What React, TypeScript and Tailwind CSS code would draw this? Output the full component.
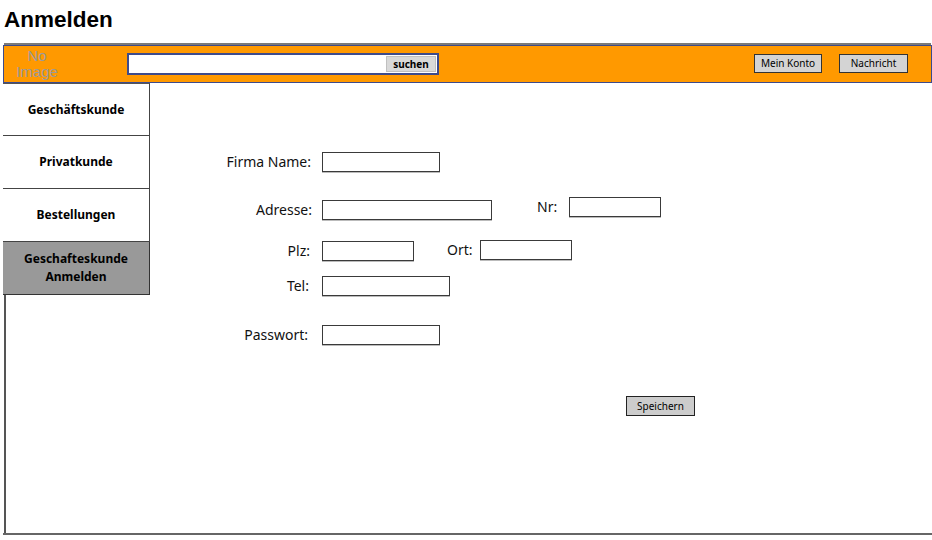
import React from "react";

const sketch = { fontFamily: '"Noto Sans", "DejaVu Sans", sans-serif' };
const arial = { fontFamily: '"Liberation Sans", Arial, sans-serif' };

function Field({ w, className = "" }: { w: string; className?: string }) {
  return <div className={`h-[20px] ${w} border border-[#3a3a3a] bg-white shadow-[0_1px_0_#bbb] ${className}`} />;
}

function Label({ children, className = "" }: { children: React.ReactNode; className?: string }) {
  return (
    <div className={`text-[14px] leading-[20px] text-[#111] ${className}`} style={sketch}>
      {children}
    </div>
  );
}

export default function App() {
  const navItems = ["Geschäftskunde", "Privatkunde", "Bestellungen"];
  return (
    <div className="w-[932px] h-[540px] bg-white overflow-hidden">
      <div className="h-[43px] pl-[4px] pt-[6px]">
        <h1 className="text-[22.5px] leading-[28px] font-bold text-black" style={arial}>
          Anmelden
        </h1>
      </div>
      <div className="ml-[4px] w-[927px] h-[2px] bg-[#7a7a7a]" />
      {/* Header bar */}
      <div className="ml-[3px] w-[929px] h-[38px] bg-[#ff9900] border border-[#3d4b8c] flex items-center">
        <div className="w-[66px] flex flex-col items-center text-[15px] leading-[16px] text-[#9a9a9a]" style={arial}>
          <span>No</span>
          <span>Image</span>
        </div>
        <div className="ml-[57px] w-[312px] h-[22px] bg-white border-2 border-[#3d4b8c] flex items-center justify-end pr-[1px]">
          <div
            className="w-[50px] h-[16px] bg-[#d9d9d9] border border-[#c0c0c0] flex items-center justify-center text-[10px] font-bold text-black"
            style={sketch}
          >
            suchen
          </div>
        </div>
        <div className="flex-1" />
        <div
          className="w-[68px] h-[19px] bg-[#d4d4d4] border border-[#333] flex items-center justify-center text-[10px] text-black mt-[-2px]"
          style={sketch}
        >
          Mein Konto
        </div>
        <div
          className="ml-[17px] mr-[23px] w-[69px] h-[19px] bg-[#d4d4d4] border border-[#333] flex items-center justify-center text-[10px] text-black mt-[-2px]"
          style={sketch}
        >
          Nachricht
        </div>
      </div>
      {/* Body */}
      <div className="ml-[3px] w-[929px] h-[452px] flex border-b-2 border-[#666]">
        <div className="w-[147px] flex flex-col">
          {navItems.map((t, i) => (
            <div
              key={t}
              className={`h-[53px] bg-white border-r border-b border-[#444] flex items-center justify-center text-[12px] font-bold text-black ${i === 0 ? "border-t border-t-[#555]" : ""}`}
              style={sketch}
            >
              {t}
            </div>
          ))}
          <div
            className="h-[53px] bg-[#999999] border-r border-b border-[#333] flex flex-col items-center justify-center text-[12px] leading-[18px] font-bold text-black"
            style={sketch}
          >
            <span>Geschafteskunde</span>
            <span>Anmelden</span>
          </div>
          <div className="flex-1 ml-[1px] border-l-2 border-[#555]" />
        </div>
        <div className="flex-1 flex flex-col pt-[69px]">
          {/* Row 1 */}
          <div className="flex items-center h-[20px]">
            <Label className="w-[161px] text-right">Firma Name:</Label>
            <Field w="w-[118px]" className="ml-[11px]" />
          </div>
          {/* Row 2 */}
          <div className="flex items-start h-[23px] mt-[25px]">
            <div className="flex items-center mt-[3px]">
              <Label className="w-[162px] text-right">Adresse:</Label>
              <Field w="w-[170px]" className="ml-[10px]" />
            </div>
            <div className="flex items-center ml-[45px]">
              <Label className="w-[32px]">Nr:</Label>
              <Field w="w-[92px]" />
            </div>
          </div>
          {/* Row 3 */}
          <div className="flex items-start h-[21px] mt-[20px]">
            <div className="flex items-center mt-[1px]">
              <Label className="w-[160px] text-right">Plz:</Label>
              <Field w="w-[92px]" className="ml-[12px]" />
            </div>
            <div className="flex items-center ml-[33px]">
              <Label className="w-[33px]">Ort:</Label>
              <Field w="w-[92px]" />
            </div>
          </div>
          {/* Row 4 */}
          <div className="flex items-center h-[20px] mt-[15px]">
            <Label className="w-[159px] text-right">Tel:</Label>
            <Field w="w-[128px]" className="ml-[13px]" />
          </div>
          {/* Row 5 */}
          <div className="flex items-center h-[20px] mt-[29px]">
            <Label className="w-[158px] text-right">Passwort:</Label>
            <Field w="w-[118px]" className="ml-[14px]" />
          </div>
          {/* Save */}
          <div className="mt-[51px] ml-[476px]">
            <div
              className="w-[69px] h-[20px] bg-[#cccccc] border border-[#222] flex items-center justify-center text-[10px] text-black"
              style={sketch}
            >
              Speichern
            </div>
          </div>
        </div>
      </div>
    </div>
  );
}
